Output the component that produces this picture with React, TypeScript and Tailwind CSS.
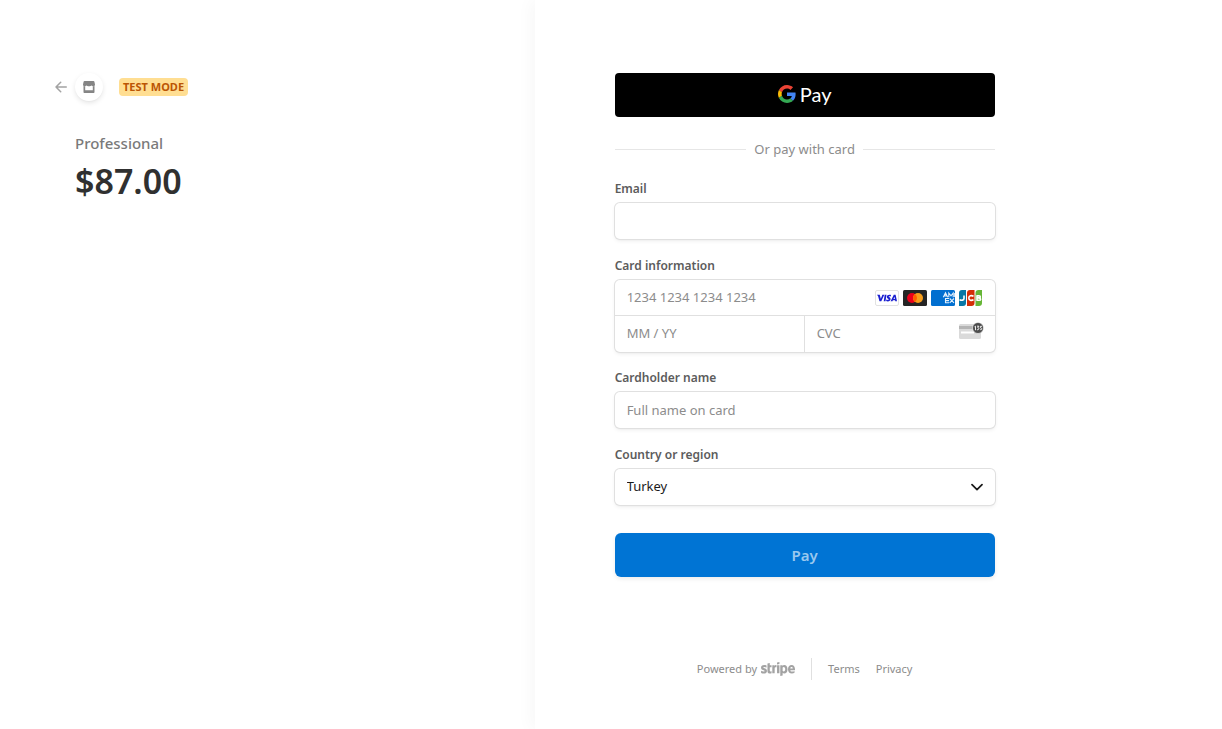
import type { ReactNode } from "react";
import { FaStripe } from "react-icons/fa";

const field =
  "h-9 w-full rounded-[5px] bg-white px-3 text-[13px] text-[#1a1a1a] placeholder-[#8c8c8c] shadow-[0_0_0_1px_#e0e0e0,0_2px_4px_rgba(0,0,0,0.07),0_1px_2px_rgba(0,0,0,0.05)] outline-none";
const cell = "w-full min-w-0 bg-transparent px-3 text-[13px] text-[#1a1a1a] placeholder-[#8c8c8c] outline-none";

function BackArrow() {
  return (
    <svg width="12" height="12" viewBox="0 0 12 12" fill="none" stroke="#a3a3a3" strokeWidth="1.5" strokeLinecap="round" strokeLinejoin="round">
      <path d="M11.3 6H1M5.7 1.2 1 6l4.700 4.800" />
    </svg>
  );
}

function StoreIcon() {
  return (
    <svg width="12" height="12" viewBox="0 0 12 12" fill="#858585">
      <path d="M1.500 0h9c.5 0 .8.3.9.8L12 3.500c0 1.100-.6 1.800-1.600 1.800-.8 0-1.300-.3-1.700-.8-.5.5-1.600.8-2.700.8s-2.200-.3-2.700-.8c-.4.5-.9.8-1.700.8C.6 5.300 0 4.600 0 3.500L.6.8C.7.3 1 0 1.500 0Z" />
      <path d="M.5 5c.8.300 1.200.300 1.700.1V9.200h7.600V5.100c.5.200.9.200 1.700-.1v6c0 .6-.4 1-1 1h-9c-.6 0-1-.4-1-1Z" />
    </svg>
  );
}

function GoogleG() {
  return (
    <svg width="18" height="18" viewBox="0 0 48 48">
      <path fill="#EA4335" d="M24 9.500c3.540 0 6.710 1.220 9.210 3.600l6.850-6.850C35.900 2.380 30.470 0 24 0 14.620 0 6.510 5.380 2.560 13.220l7.980 6.190C12.430 13.720 17.740 9.500 24 9.500z" />
      <path fill="#4285F4" d="M46.980 24.550c0-1.570-.15-3.090-.38-4.550H24v9.020h12.940c-.58 2.960-2.260 5.480-4.780 7.180l7.730 6c4.510-4.180 7.090-10.360 7.090-17.650z" />
      <path fill="#FBBC05" d="M10.530 28.590c-.48-1.450-.76-2.990-.76-4.590s.27-3.140.76-4.590l-7.980-6.190C.92 16.460 0 20.120 0 24c0 3.880.92 7.540 2.560 10.780l7.970-6.190z" />
      <path fill="#34A853" d="M24 48c6.480 0 11.930-2.130 15.890-5.810l-7.730-6c-2.150 1.450-4.920 2.300-8.160 2.300-6.260 0-11.570-4.220-13.470-9.910l-7.980 6.190C6.510 42.620 14.620 48 24 48z" />
    </svg>
  );
}

function CardBrands() {
  return (
    <div className="flex shrink-0 gap-1 pr-3">
      <svg width="24" height="16" viewBox="0 0 24 16" aria-label="Visa">
        <rect x=".5" y=".5" width="23" height="15" rx="1.500" fill="#fff" stroke="#e2e2e2" />
        <path fill="#1a1fd0" d="M2 4.800h2.800l1 4 1.600-4h1.900l-3 6.500H4.500L3.100 6.200ZM9.700 4.800h1.800l-1 6.500H8.700ZM16 5l-.3 1.500c-1-.5-2-.4-2 .1 0 .6 1.900.8 1.900 2.500 0 2.200-2.500 2.700-4.500 2l.3-1.500c1.100.5 2.300.5 2.300-.1 0-.7-1.900-.8-1.900-2.500 0-1.900 2.200-2.700 4.200-2ZM18.800 4.800h1.800l1.400 6.500h-1.700l-.2-1h-2.200l-.4 1h-1.900Zm.7 2-1 2.300h1.400Z" />
      </svg>
      <svg width="24" height="16" viewBox="0 0 24 16" aria-label="Mastercard">
        <rect width="24" height="16" rx="1.500" fill="#252525" />
        <circle cx="9" cy="8" r="5" fill="#eb001b" />
        <circle cx="15" cy="8" r="5" fill="#f79e1b" />
        <path d="M12 4a5 5 0 0 1 0 8 5 5 0 0 1 0-8Z" fill="#ff5f00" />
      </svg>
      <svg width="24" height="16" viewBox="0 0 24 16" aria-label="American Express">
        <rect width="24" height="16" rx="1.500" fill="#016fd0" />
        <path d="m12.300 7.300 2.200-4.500 2.200 4.500M13.300 5.900h2.400M17.800 7.300V3l2.200 2.800L22.200 3v4.300M23.700 3v4M18 8.500h-3.500v4.300H18M14.500 10.600H18M18.700 8.500l4.300 4.300M23 8.500l-4.300 4.300" fill="none" stroke="#e3f0fb" strokeWidth="1.100" />
      </svg>
      <svg width="24" height="16" viewBox="0 0 24 16" aria-label="JCB">
        <path d="M3 0h4v13a3 3 0 0 1-3 3H0V3a3 3 0 0 1 3-3Z" fill="#0877a6" />
        <path d="M11 0h4.500v13a3 3 0 0 1-3 3H8V3a3 3 0 0 1 3-3Z" fill="#d42d06" />
        <path d="M19.500 0H23v13a3 3 0 0 1-3 3h-3.500V3a3 3 0 0 1 3-3Z" fill="#67b637" />
        <path d="M5 5.500v3c0 2-2.500 2-4.500 1.200M14.500 6.200c-2-1-4.700-.7-4.700 1.800s2.700 2.800 4.700 1.800M17.500 5.900H20c1.800 0 1.800 2 0 2h-2.500M17.500 8H20c2.200 0 2.200 2.300 0 2.300h-2.500M18 5.500v5" fill="none" stroke="#fff" strokeWidth="1.600" />
      </svg>
    </div>
  );
}

function CvcIcon() {
  return (
    <svg width="25" height="18" viewBox="0 0 25 18" className="mr-[11px] mb-1.5 shrink-0" aria-hidden="true">
      <rect y="2" width="22" height="15" rx="1.500" fill="#dadada" />
      <path d="M0 4h22v3H0Z" fill="#b4b4b4" />
      <path d="M2 9.500h13v2H2Z" fill="#fff" />
      <circle cx="19" cy="6" r="5.500" fill="#4c4c4c" stroke="#fff" strokeWidth=".6" />
      <path d="m15.500 4.800 1-.6v4M18 4.200h1.900L18.800 5.800c1.700 0 1.500 2.400-.9 1.900M23 4.300h-1.600v1.500c2 0 1.800 2.400-.2 1.900" fill="none" stroke="#fff" strokeWidth=".9" />
    </svg>
  );
}

function Label({ id, children }: { id: string; children: ReactNode }) {
  return (
    <label htmlFor={id} className="mb-1 block text-xs leading-5 font-semibold text-[#5c5c5c]">
      {children}
    </label>
  );
}

export default function App() {
  return (
    <div className="grid min-h-screen grid-cols-[7fr_9fr] bg-white font-['Noto_Sans',sans-serif]">
      <section className="pt-[73px] pl-[55px]">
        <div className="flex items-center">
          <a href="#back" aria-label="Back">
            <BackArrow />
          </a>
          <span className="ml-2 flex size-7 items-center justify-center rounded-full bg-white shadow-[0_2px_5px_rgba(0,0,0,0.1),0_1px_1px_rgba(0,0,0,0.02)]">
            <StoreIcon />
          </span>
          <span className="ml-4 rounded bg-[#ffde92] px-1 text-[11px] leading-[18px] font-bold text-[#bb5504]">TEST MODE</span>
        </div>
        <div className="mt-7 pl-5">
          <h1 className="text-[15px] leading-7 font-medium text-[#7a7a7a]">Professional</h1>
          <p className="text-[34px] leading-[48px] font-semibold text-[#303030]">$87.00</p>
        </div>
      </section>

      <main className="px-20 pt-[73px] shadow-[-5px_0_15px_rgba(0,0,0,0.03)]">
        <form className="w-full max-w-[380px]" onSubmit={(e) => e.preventDefault()}>
          <button type="button" aria-label="Google Pay" className="flex h-11 w-full items-center justify-center gap-1 rounded bg-black pb-0.5 text-white">
            <GoogleG />
            <span className="font-['Lato',sans-serif] text-xl leading-6">Pay</span>
          </button>

          <div className="mt-[22px] mb-5 flex items-center gap-2 text-[13px] leading-5 text-[#8c8c8c]">
            <span className="h-px flex-1 bg-[#e6e6e6]" />
            Or pay with card
            <span className="h-px flex-1 bg-[#e6e6e6]" />
          </div>

          <Label id="email">Email</Label>
          <input id="email" type="email" className={field} />

          <fieldset className="mt-[17px]">
            <Label id="number">Card information</Label>
            <div className="rounded-[5px] bg-white shadow-[0_0_0_1px_#e0e0e0,0_2px_4px_rgba(0,0,0,0.07),0_1px_2px_rgba(0,0,0,0.05)]">
              <div className="flex h-9 items-center border-b border-[#e0e0e0]">
                <input id="number" placeholder="1234 1234 1234 1234" className={cell} />
                <CardBrands />
              </div>
              <div className="grid h-9 grid-cols-2">
                <input aria-label="Expiration" placeholder="MM / YY" className={`${cell} border-r border-[#e0e0e0]`} />
                <div className="flex items-center">
                  <input aria-label="CVC" placeholder="CVC" className={cell} />
                  <CvcIcon />
                </div>
              </div>
            </div>
          </fieldset>

          <div className="mt-4">
            <Label id="name">Cardholder name</Label>
            <input id="name" placeholder="Full name on card" className={field} />
          </div>

          <div className="mt-[17px]">
            <Label id="country">Country or region</Label>
            <div className="grid items-center">
              <select id="country" className={`${field} col-start-1 row-start-1 appearance-none`}>
                <option>Turkey</option>
              </select>
              <svg width="12" height="8" viewBox="0 0 12 8" className="pointer-events-none col-start-1 row-start-1 mr-3 justify-self-end" fill="none" stroke="#1a1a1a" strokeWidth="1.700" strokeLinecap="round" strokeLinejoin="round">
                <path d="m1 1.700 5 5 5-5" />
              </svg>
            </div>
          </div>

          <button type="submit" className="mt-7 h-11 w-full rounded-md bg-[#0074d4] text-[15px] font-semibold text-[#99c8ee] shadow-[0_2px_4px_rgba(0,0,0,0.08)]">
            Pay
          </button>
        </form>

        <footer className="mt-[81px] flex max-w-[380px] items-center justify-center text-[11px] leading-[22px] text-[#8c8c8c]">
          <a href="https://stripe.com" className="flex items-center gap-1 border-r border-[#e0e0e0] pr-4">
            Powered by
            <FaStripe aria-label="stripe" className="-my-1 h-7 w-[34px] text-[#a3a3a3]" />
          </a>
          <a href="#terms" className="ml-4">Terms</a>
          <a href="#privacy" className="ml-4">Privacy</a>
        </footer>
      </main>
    </div>
  );
}
